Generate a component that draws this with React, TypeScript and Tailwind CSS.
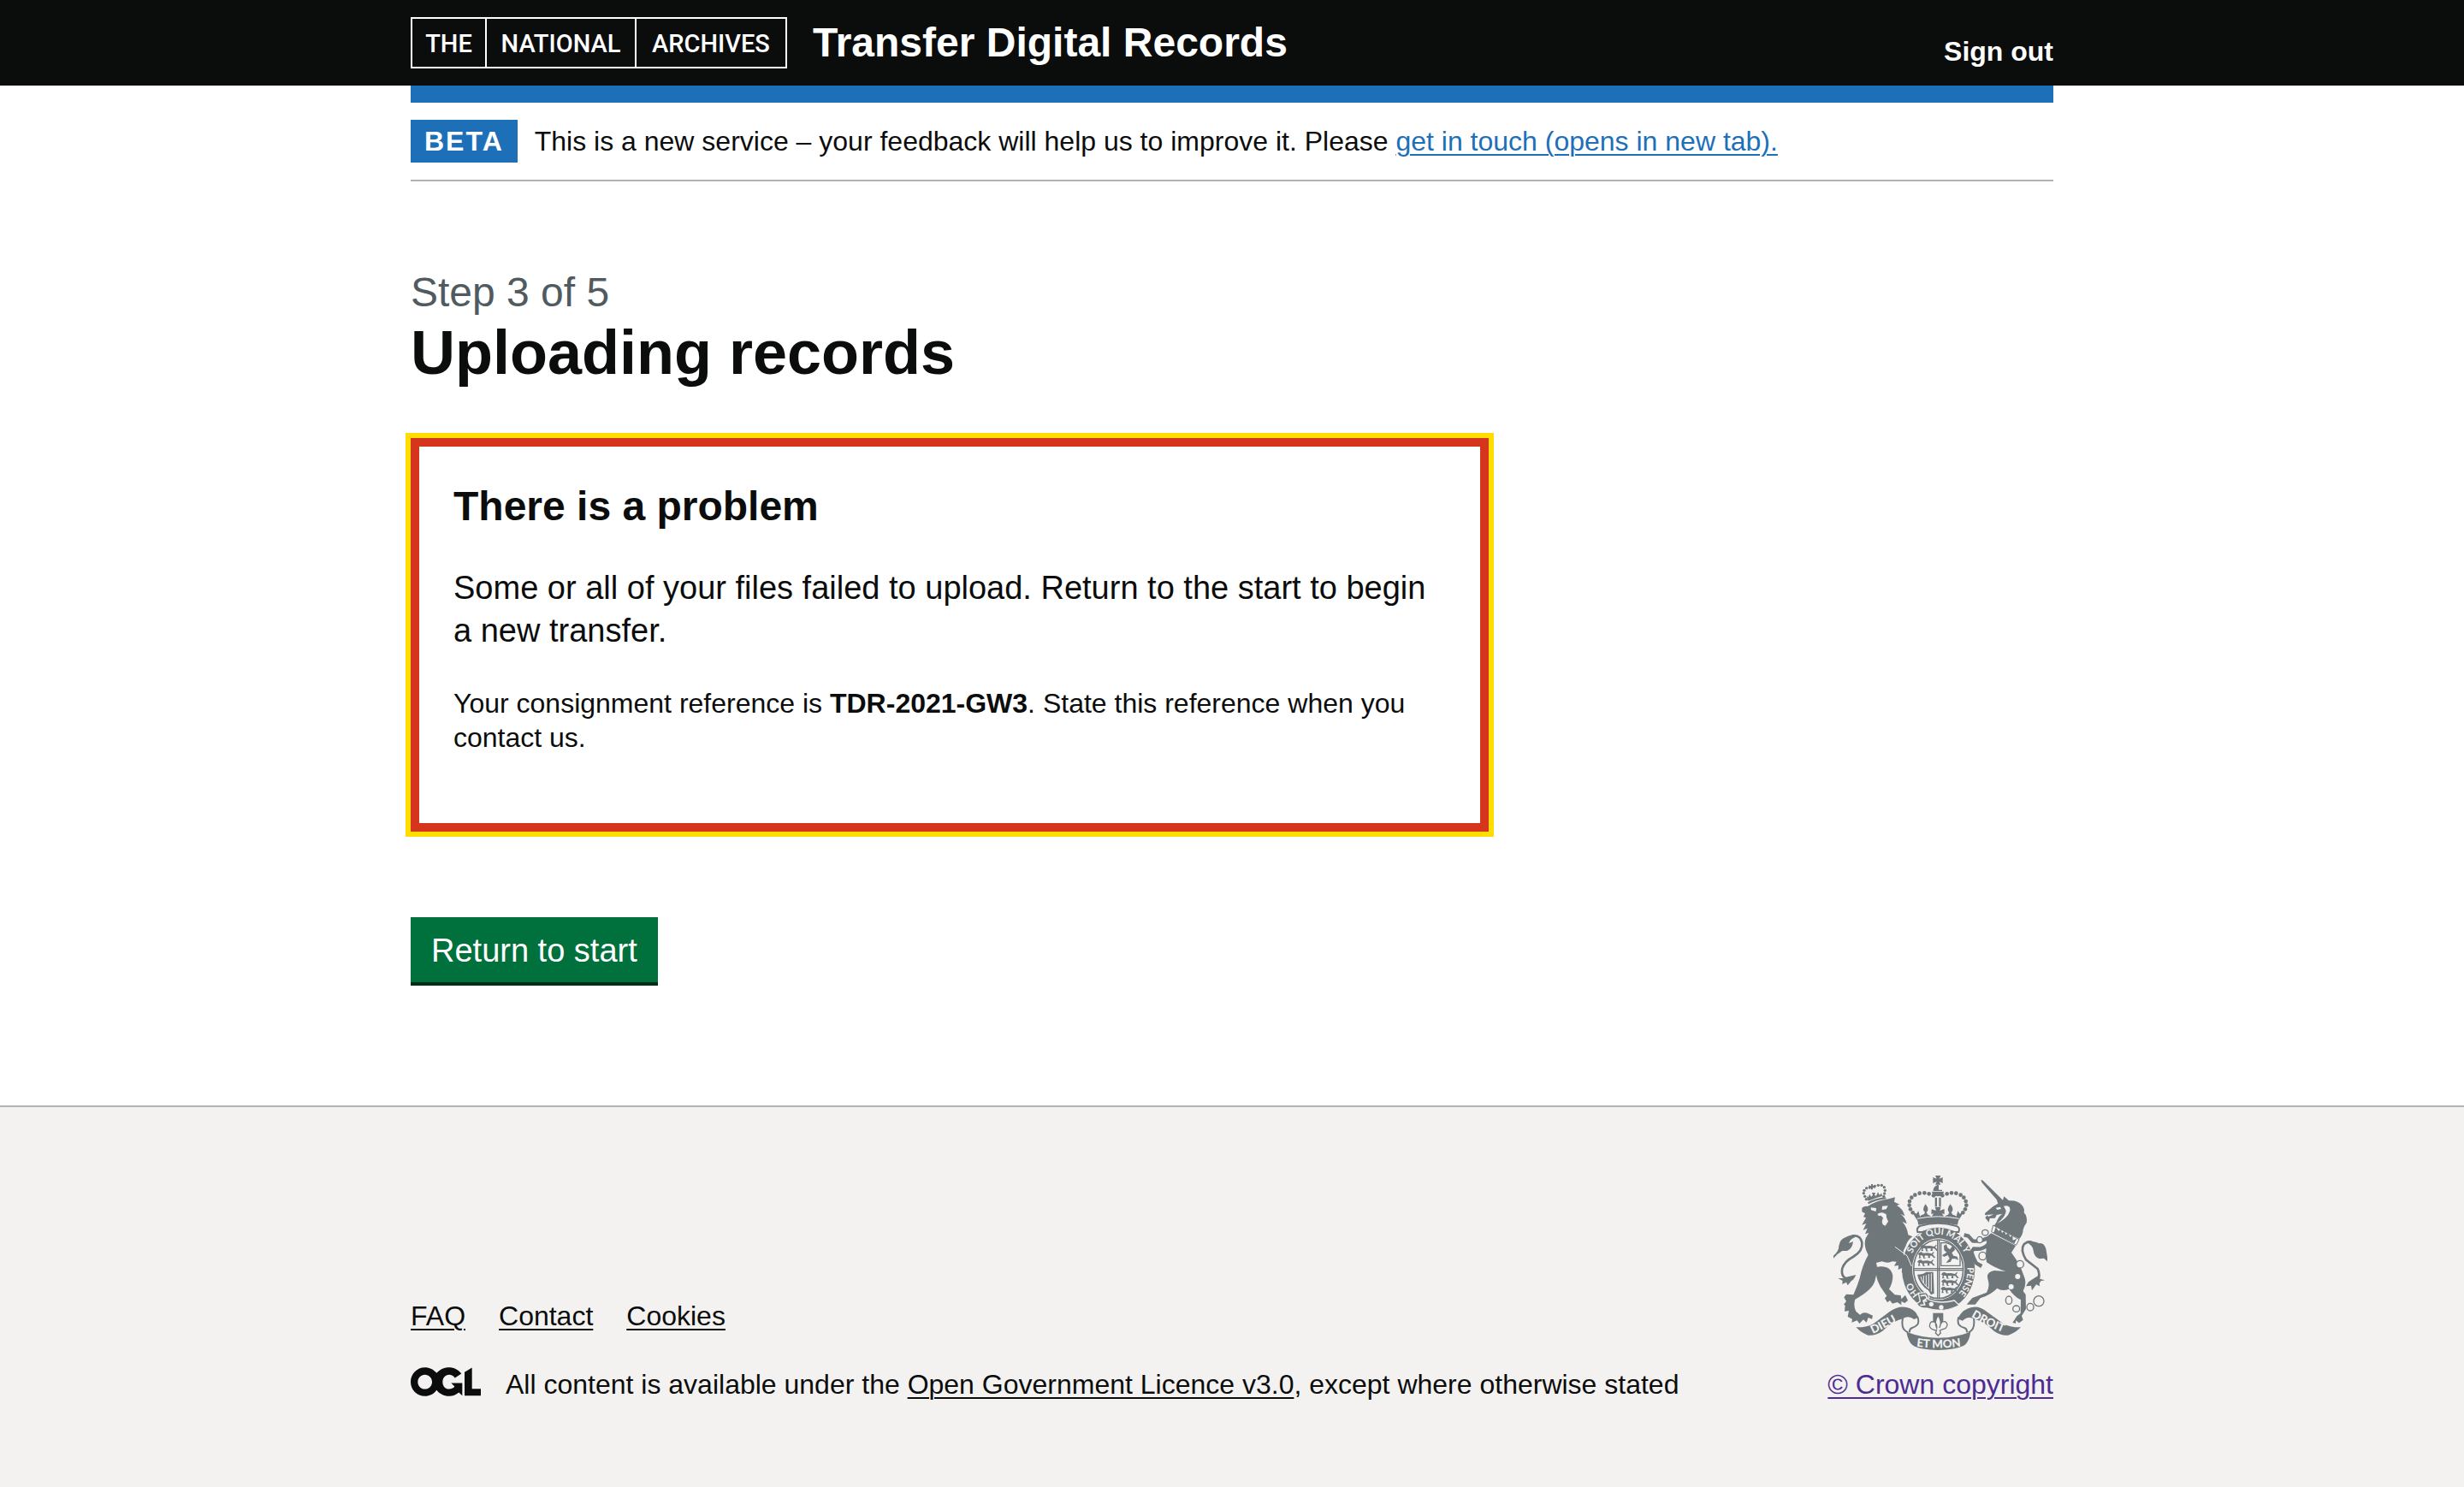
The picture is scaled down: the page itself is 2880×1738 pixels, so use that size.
import React from "react";

const link = "underline decoration-2 underline-offset-4";

function ArchivesLogo() {
  return (
    <a
      href="#"
      className="flex h-[60px] w-[440px] border-2 border-white text-center font-['Roboto','Liberation_Sans',sans-serif] text-[29px] leading-[58px] font-medium text-white"
    >
      <span className="w-[87px] border-r-2 border-white">THE</span>
      <span className="w-[175px] border-r-2 border-white">NATIONAL</span>
      <span className="grow">ARCHIVES</span>
    </a>
  );
}

function OglLogo() {
  return (
    <svg viewBox="0 0 246 101" className="h-[34px] w-[82px] shrink-0" fill="#0b0c0c" aria-label="Open Government Licence" role="img">
      <path fillRule="evenodd" d="M50 0C66 0 82 8 91 20C101 8 117 0 134 0C152 0 168 8 178 22L155 37C150 30 143 26 135 26C121 26 112 37 112 51C112 65 121 76 135 76C144 76 151 72 154 67L142 55H181V99L169 88C159 96 148 101 135 101C116 101 101 93 91 80C81 93 67 101 50 101C22 101 0 78 0 51C0 23 22 0 50 0ZM50 26C36 26 25 37 25 51C25 65 36 76 50 76C64 76 75 65 75 51C75 37 64 26 50 26Z" />
      <path d="M189 17L215 1V75H246V99H189Z" />
    </svg>
  );
}

function Pearls({ points, r }: { points: number[][]; r: number }) {
  return (
    <>
      {points.map(([x, y]) => (
        <circle key={`${x}-${y}`} cx={x} cy={y} r={r} />
      ))}
    </>
  );
}

const crownPearls = [
  [419, 112], [403, 106], [387, 103], [370, 104], [354, 110], [342, 119], [335, 132], [334, 146], [338, 160], [346, 172],
  [450, 112], [466, 106], [482, 103], [498, 104], [514, 110], [525, 119], [532, 132], [534, 146], [530, 160], [522, 172],
];
const lionPearls = [
  [195, 84], [184, 86], [176, 94], [174, 104], [178, 115], [183, 125], [213, 79], [225, 76], [237, 76], [246, 83], [249, 94], [247, 105], [244, 115],
];

function Passant({ x, y }: { x: number; y: number }) {
  return (
    <path
      transform={`translate(${x} ${y})`}
      d="M0 8L6 2L13 1L18 5L34 4L48 7L55 0L57 3L52 9L56 14L62 21L56 22L49 14L42 14L43 22L35 22L37 14L25 13L23 20L29 23L20 24L17 14L10 12L8 18L12 22L3 23L5 13Z"
    />
  );
}

function RoyalArms() {
  const bg = "#f3f2f1";
  return (
    <svg viewBox="68 42 750 612" className="h-[204px] w-[250px]" fill="#6f777b" role="img" aria-label="Royal coat of arms">
      {/* imperial crown */}
      <path d="M425 42H444L439 53L451 48V69L439 63L444 74H425L430 63L417 69V48L430 53Z" />
      <path d="M432 75H437V92H449V96H418V92Q420 80 432 76ZM413 98H455Q454 114 434 115Q415 113 413 98ZM424 119H431V151H424ZM438 119H445V151H438Z" />
      <Pearls points={crownPearls} r={7} />
      <path d="M345 168L359 176L366 166L371 185Q377 179 385 178L389 171Q376 161 391 142Q406 161 394 171L399 179Q407 181 412 187L419 174L411 178L412 160L428 165L424 152H445L441 165L457 159L457 178L448 174L456 187Q462 181 470 179L474 171Q462 160 478 142Q493 161 481 171L486 179Q494 181 499 185L504 166L511 176L523 168Q518 184 506 200L503 215Q434 202 366 215L363 200Q350 184 345 168Z" />
      <path d="M362 193Q434 178 508 193" fill="none" stroke={bg} strokeWidth="3" />
      <path d="M371 219Q434 199 499 219Q513 223 507 240L490 240Q434 219 380 240L363 240Q358 225 371 219Z" fill={bg} stroke="#6f777b" strokeWidth="6" />

      {/* garter and shield */}
      <ellipse cx="436" cy="370" rx="128" ry="146" />
      <ellipse cx="436" cy="370" rx="92" ry="108" fill={bg} />
      <ellipse cx="436" cy="370" rx="87" ry="103" fill="none" stroke="#6f777b" strokeWidth="5" />
      <g fill="none" stroke="#6f777b" strokeWidth="4">
        <path d="M433 268V472M439 268V472M349 368H523M349 374H523" />
        <path d="M445 278V358H512V318Q494 286 462 277Z" />
      </g>
      <Passant x={373} y={284} />
      <Passant x={364} y={309} />
      <Passant x={362} y={336} />
      <Passant x={446} y={380} />
      <Passant x={446} y={405} />
      <Passant x={444} y={431} />
      <path d="M455 288L464 283L468 295L476 301L484 291L480 283L490 287L494 303L483 313L489 323L502 326L506 338L496 334L484 334L479 344L463 349L468 341L475 333L469 321L456 327L449 322L465 311L456 304Z" />
      <path d="M362 389Q383 389 393 380H418L421 455L410 460L401 445Q369 424 362 389Z" />
      <path d="M374 396Q379 420 403 439M384 393V420M393 391V429M402 387V437M411 385V449" fill="none" stroke={bg} strokeWidth="3" />
      <g fill={bg} fontFamily="Lato, sans-serif" fontWeight="700" fontSize="32">
        <path id="garterTop" d="M335 350A102 118 0 0 1 537 350" fill="none" />
        <path id="garterRight" d="M537 358A101 118 0 0 1 440 488" fill="none" />
        <path id="garterLeft" d="M374 464A101 121 0 0 1 335 350" fill="none" />
        <text><textPath href="#garterTop" startOffset="50%" textAnchor="middle">SOIT QUI MAL Y</textPath></text>
        <text><textPath href="#garterRight" startOffset="6">PENSE</textPath></text>
        <text><textPath href="#garterLeft" startOffset="8">HO</textPath></text>
      </g>
      <path d="M366 454L394 452Q408 467 400 476Q440 494 492 480L509 497Q452 526 393 507Q369 509 360 491L372 483Z" stroke={bg} strokeWidth="4" />
      <path d="M373 464L390 461L397 472L383 481L388 495L372 496M383 482L396 482" fill="none" stroke={bg} strokeWidth="5" />
      <g fill={bg}>
        <circle cx="411" cy="493" r="8" />
        <circle cx="446" cy="504" r="8" />
      </g>

      {/* lion */}
      <Pearls points={lionPearls} r={5} />
      <path d="M200 72H206V78L214 76V87L206 84V91H200V84L192 87V76L200 79ZM184 113L190 118L195 107L200 116L206 111L203 102H215L212 111L218 113L224 100L229 110L237 104L239 114Q215 120 190 131Z" />
      <path d="M188 136Q215 121 251 118L253 124Q219 127 191 142Z" />
      <path d="M168 155Q178 148 188 150Q220 129 262 124L284 118L281 134L300 143L290 147Q312 158 318 184L303 176Q321 190 325 211L309 203Q326 221 330 250L345 256Q327 269 321 290Q308 310 316 322L336 337L331 356L339 384L333 397L323 384L317 397L307 379L310 365L295 372L296 357L281 359L289 344L275 343Q258 351 238 343L218 348L221 362Q270 355 276 394Q276 420 263 440L283 460L304 462L306 475L320 461L329 480L318 489L306 483L306 496L292 486L275 491L266 480L257 487L248 472L255 464L233 432Q220 408 218 391L214 409Q206 443 144 476Q137 499 147 518L161 530Q175 518 190 526L206 533L203 545L190 540L184 557L173 547L159 561L151 550L132 557L134 545L118 537L122 516L107 518L109 497L104 494L113 483L105 469L113 458L138 460Q152 429 160 402Q169 357 190 320Q172 288 181 262L192 243L179 247L187 227L172 233L183 210L168 215L182 190L173 187L179 175L168 169Z" />
      <path d="M199 154L218 156L217 168L200 163ZM239 149L259 148L253 160L238 162ZM222 177Q237 166 253 178L254 189L260 203L250 218L241 214L238 203L242 190L234 182L227 184Z" fill={bg} />
      <path d="M284 292L326 323L342 360" fill="none" stroke={bg} strokeWidth="3" />
      <path d="M130 405Q91 405 99 367Q108 342 137 327Q172 306 168 277Q163 251 137 253Q119 259 109 276" fill="none" stroke="#6f777b" strokeWidth="8" />
      <path d="M144 250Q120 252 110 259Q92 264 87 288Q88 306 68 323V332Q80 317 99 306H116Q134 299 137 273Q128 278 122 279Q127 264 144 258ZM118 397L147 390Q139 408 131 411L118 427L113 416L99 423L100 411L84 402H105Z" />

      {/* unicorn */}
      <path d="M585 57L592 59L662 128L666 115L683 130Q714 127 730 147Q740 160 736 172Q749 185 745 208Q736 219 733 232Q733 248 720 264L630 220L640 205Q645 187 660 176L640 180L635 191L616 192L613 206L600 190L608 179L599 181L600 173L629 149L645 140L640 126L588 66Z" />
      <path d="M637 155L653 152L656 159L642 162ZM605 180L630 178L612 186ZM665 149Q690 143 687 166Q678 193 642 210Q674 184 673 165Z" fill={bg} />
      <path d="M628 216L719 266L709 286L622 239Z" fill={bg} stroke="#6f777b" strokeWidth="3" />
      <path d="M632 238L637 222L647 236L655 230L659 243L667 237L673 250L681 242L687 257L696 251L697 269L711 263L702 280L628 244Z" />
      <path d="M621 244L707 288L692 312Q714 341 726 368L738 400Q746 422 733 447L742 459L743 510L728 534L733 548L719 559L708 550L707 560L696 558L711 535L724 525L725 478Q701 466 684 440Q658 449 642 437Q622 459 583 472L565 494H535L555 471L605 452Q618 430 609 404Q603 380 632 375L672 378Q635 367 605 346L602 321L605 281L605 257Z" />
      <path d="M609 262L580 272L557 272L541 254L526 250M609 284Q590 304 560 298L552 310Q560 334 569 349L588 360" fill="none" stroke="#6f777b" strokeWidth="13" strokeLinejoin="round" />
      <path d="M759 418Q801 408 784 369L743 337Q722 301 736 283Q759 263 777 288" fill="none" stroke="#6f777b" strokeWidth="8" />
      <path d="M746 271L778 275L789 280Q804 275 813 298L819 335V344L806 332L790 334Q771 326 769 305Q768 291 752 280ZM776 399L793 389L792 404L809 409L795 412L790 421L792 430L779 424L764 445L761 428L743 430L752 415Z" />
      <g fill={bg} stroke="#6f777b" strokeWidth="4">
        <ellipse cx="600" cy="242" rx="11" ry="10" />
        <ellipse cx="581" cy="267" rx="10" ry="11" />
        <ellipse cx="591" cy="324" rx="13" ry="14" />
        <circle cx="722" cy="353" r="13" />
        <circle cx="714" cy="396" r="9" stroke="none" />
        <circle cx="691" cy="432" r="9" stroke="none" />
        <ellipse cx="683" cy="479" rx="11" ry="14" />
        <ellipse cx="709" cy="509" rx="12" ry="11" />
        <ellipse cx="758" cy="503" rx="12" ry="13" />
        <circle cx="788" cy="482" r="18" />
      </g>

      {/* motto ribbon */}
      <path d="M332 514Q354 523 362 550Q364 568 345 574Q327 577 331 590M538 514Q508 527 505 550Q507 567 527 573Q545 577 540 590" fill="none" stroke={bg} strokeWidth="16" />
      <path d="M147 574Q186 575 210 560L264 520Q302 492 337 508Q360 518 364 540L351 546Q331 530 311 544Q273 553 240 587Q216 604 190 602Q170 597 147 574Z" />
      <path d="M725 574Q688 575 662 560L606 520Q574 492 540 508Q512 520 505 545L521 551Q539 533 558 544Q598 553 631 587Q655 604 680 602Q702 597 725 574Z" />
      <path d="M324 590Q380 611 434 611Q492 611 549 590Q543 628 525 638Q510 645 491 649Q434 659 378 649Q357 645 345 636Q330 624 324 590Z" />
      <path d="M362 535Q370 555 362 565Q354 573 344 576Q334 579 335 592M311 543Q303 583 330 592M507 538Q502 555 508 565Q515 573 527 576Q537 579 536 592M560 543Q566 583 541 592" fill="none" stroke="#6f777b" strokeWidth="6" />
      <g fill={bg} fontFamily="Lato, sans-serif" fontWeight="900" fontSize="40">
        <path id="mottoLeft" d="M206 597Q251 577 330 529" fill="none" />
        <path id="mottoMid" d="M330 637Q434 656 544 636" fill="none" />
        <path id="mottoRight" d="M532 524Q604 572 700 606" fill="none" />
        <text><textPath href="#mottoLeft">DIEU</textPath></text>
        <text><textPath href="#mottoMid" startOffset="50%" textAnchor="middle">ET MON</textPath></text>
        <text><textPath href="#mottoRight" startOffset="22">DROIT</textPath></text>
      </g>

      {/* fleur-de-lis */}
      <path d="M417 524H453V565H417Z" />
      <path d="M435 532Q450 554 440 576Q444 551 459 554Q474 562 461 578Q447 582 441 585L444 594L435 603L426 594L429 585Q410 583 405 571Q405 551 421 555Q432 561 430 577Q420 553 435 532Z" fill={bg} stroke="#6f777b" strokeWidth="4" />
    </svg>
  );
}

export default function App() {
  return (
    <div className="flex min-h-screen flex-col bg-white font-['Liberation_Sans',Arial,sans-serif] text-[32px] leading-[40px] text-[#0b0c0c]">
      <header className="bg-[#0b0c0c] px-[60px] text-white">
        <div className="mx-auto flex h-[100px] max-w-[1920px] items-center">
          <ArchivesLogo />
          <a href="#" className="ml-[30px] text-[48px] leading-[60px] font-bold">Transfer Digital Records</a>
          <a href="#" className="mt-5 ml-auto font-bold">Sign out</a>
        </div>
      </header>

      <div className="px-[60px]">
        <div className="mx-auto max-w-[1920px] border-t-[20px] border-[#1d70b8]">
          <div className="flex items-center gap-5 border-b-2 border-[#b1b4b6] py-5">
            <strong className="bg-[#1d70b8] px-4 leading-[50px] tracking-[2px] text-white">BETA</strong>
            <span>
              This is a new service – your feedback will help us to improve it. Please{" "}
              <a href="#" className={`${link} text-[#1d70b8]`}>get in touch (opens in new tab).</a>
            </span>
          </div>
        </div>
      </div>

      <main className="grow px-[60px] pt-[100px] pb-[144px]">
        <div className="mx-auto max-w-[1920px]">
          <div className="max-w-[1260px]">
            <p className="text-[48px] leading-[60px] text-[#505a5f]">Step 3 of 5</p>
            <h1 className="text-[72px] leading-[80px] font-bold">Uploading records</h1>
            <section role="alert" className="mt-[60px] border-[10px] border-[#d4351c] px-10 pt-10 pb-20 outline-[6px] outline-[#ffdd00]">
              <h2 className="text-[48px] leading-[60px] font-bold">There is a problem</h2>
              <p className="mt-10 text-[38px] leading-[50px]">
                Some or all of your files failed to upload. Return to the start to begin a new transfer.
              </p>
              <p className="mt-10">
                Your consignment reference is <strong>TDR-2021-GW3</strong>. State this reference when you contact us.
              </p>
            </section>
            <button type="button" className="mt-[100px] block bg-[#00703c] px-6 pt-5 pb-[18px] text-[38px] leading-[38px] text-white shadow-[0_4px_0_#002d18]">
              Return to start
            </button>
          </div>
        </div>
      </main>

      <footer className="border-t-2 border-[#b1b4b6] bg-[#f3f2f1] px-[60px] pt-20 pb-[100px]">
        <div className="mx-auto flex max-w-[1920px] items-end justify-between">
          <div>
            <nav className="mb-10 flex gap-[39px]">
              <a href="#" className={link}>FAQ</a>
              <a href="#" className={link}>Contact</a>
              <a href="#" className={link}>Cookies</a>
            </nav>
            <div className="flex items-start gap-[29px]">
              <OglLogo />
              <span>
                All content is available under the <a href="#" className={link}>Open Government Licence v3.0</a>, except where otherwise stated
              </span>
            </div>
          </div>
          <a href="#" className="flex flex-col items-center gap-5 text-[#4c2c92]">
            <RoyalArms />
            <span className={link}>© Crown copyright</span>
          </a>
        </div>
      </footer>
    </div>
  );
}
